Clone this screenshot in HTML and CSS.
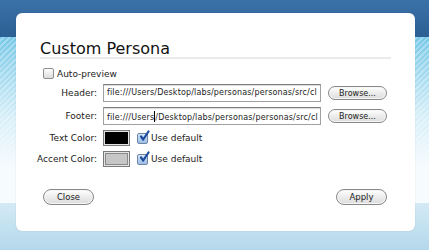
FILE: index.html
```html
<!DOCTYPE html>
<html lang="en">
<head>
    <meta charset="UTF-8">
    <title>Custom Persona</title>
    <link rel="stylesheet" href="styles.css">
</head>
<body>
    <div class="panel">
        <h1 class="title">Custom Persona</h1>
        <div class="rule"></div>

        <label class="auto-row">
            <span class="check"></span>
            <span>Auto-preview</span>
        </label>

        <div class="form">
            <span class="label">Header:</span>
            <div class="field">
                <div class="url">file:///Users/Desktop/labs/personas/personas/src/cl</div>
                <button class="btn browse">Browse...</button>
            </div>

            <span class="label">Footer:</span>
            <div class="field">
                <div class="url">file:///Users<span class="caret"></span>/Desktop/labs/personas/personas/src/cl</div>
                <button class="btn browse">Browse...</button>
            </div>

            <span class="label">Text Color:</span>
            <div class="field">
                <span class="swatch"><span class="fill dark"></span></span>
                <span class="check checked">
                    <svg width="13" height="13" viewBox="0 0 13 13"><path d="M3 6.5 L5.2 9.5 L10.5 1.5" fill="none" stroke="#1d4c9c" stroke-width="2.2" stroke-linecap="round" stroke-linejoin="round"/></svg>
                </span>
                <span class="default">Use default</span>
            </div>

            <span class="label">Accent Color:</span>
            <div class="field">
                <span class="swatch"><span class="fill light"></span></span>
                <span class="check checked">
                    <svg width="13" height="13" viewBox="0 0 13 13"><path d="M3 6.5 L5.2 9.5 L10.5 1.5" fill="none" stroke="#1d4c9c" stroke-width="2.2" stroke-linecap="round" stroke-linejoin="round"/></svg>
                </span>
                <span class="default">Use default</span>
            </div>
        </div>

        <div class="actions">
            <button class="btn wide">Close</button>
            <button class="btn wide">Apply</button>
        </div>
    </div>
</body>
</html>
```

FILE: styles.css
```css
html, body {
    margin: 0;
    width: 429px;
    height: 250px;
    overflow: hidden;
}

body {
    font-family: 'DejaVu Sans', 'Liberation Sans', sans-serif;
    color: #222;
    padding: 13px 0 0 16px;
    box-sizing: border-box;
    background:
        linear-gradient(#3a72a8, #2c5f94) 0 0 / 100% 37px no-repeat,
        linear-gradient(#d4eaf5, #b3d8eb) 0 203px / 100% 47px no-repeat,
        linear-gradient(rgba(255, 255, 255, 0), rgba(255, 255, 255, 0.7) 80px, #f6fbfd 130px) 0 37px / 100% 166px no-repeat,
        repeating-linear-gradient(135deg, #78c8e7 0 2px, #9fd9ef 2px 4px) 0 37px / 100% 166px no-repeat;
}

.panel {
    width: 399px;
    height: 218px;
    background: #fff;
    border-radius: 6px;
    box-shadow: 0 0 1px rgba(0, 0, 0, 0.25);
    padding-top: 27px;
    box-sizing: border-box;
}

.title {
    margin: 0 0 0 24px;
    font-size: 16px;
    font-weight: normal;
    line-height: 17px;
    color: #111;
}

.rule {
    margin-left: 24px;
    width: 351px;
    height: 2px;
    background: #ebebeb;
}

.auto-row {
    display: flex;
    align-items: center;
    gap: 3px;
    margin: 9px 0 0 27px;
    height: 11px;
    font-size: 9px;
}

.check {
    position: relative;
    width: 9px;
    height: 9px;
    border: 1px solid #8d8d8d;
    border-radius: 2px;
    background: linear-gradient(#fdfdfd, #dcdcdc);
    flex: none;
}

.check.checked {
    background: linear-gradient(#d7e6f7, #9cbde4);
    border-color: #6e86a8;
}

.check svg {
    position: absolute;
    left: 0;
    top: -4px;
}

.form {
    display: grid;
    grid-template-columns: 81px auto;
    grid-template-rows: 18px 18px 16px 16px;
    row-gap: 5px;
    column-gap: 6px;
    margin-top: 5px;
    font-size: 9px;
}

.form .label {
    text-align: right;
    align-self: center;
}

.field {
    display: flex;
    align-items: center;
}

.url {
    width: 218px;
    height: 18px;
    box-sizing: border-box;
    border: 1px solid #a0a0a0;
    border-top-color: #7c7c7c;
    box-shadow: inset 0 1px 1px rgba(0, 0, 0, 0.15);
    padding: 3px 0 0 3px;
    font-size: 8px;
    letter-spacing: 0.15px;
    white-space: nowrap;
    overflow: hidden;
    background: #fff;
}

.caret {
    display: inline-block;
    width: 1px;
    height: 11px;
    background: #000;
    vertical-align: -2px;
}

.btn {
    font-family: inherit;
    font-size: 8px;
    color: #222;
    border: 1px solid #888;
    border-radius: 8px;
    background: linear-gradient(#ffffff, #ececec 50%, #dcdcdc);
    box-shadow: inset 0 0 0 1px #f6f6f6;
    padding: 0;
}

.browse {
    width: 59px;
    height: 14px;
    margin-left: 7px;
}

.swatch {
    width: 27px;
    height: 16px;
    box-sizing: border-box;
    border: 1px solid #7a7a7a;
    padding: 1px;
    background: #e4e4e4;
    display: flex;
}

.fill {
    flex: 1;
}

.fill.dark {
    background: #000;
}

.fill.light {
    background: #c6c6c6;
    border: 1px solid #8a8a8a;
}

.field .check {
    margin-left: 7px;
}

.default {
    margin-left: 3px;
}

.actions {
    display: flex;
    justify-content: space-between;
    margin: 22px 28px 0 27px;
}

.wide {
    width: 51px;
    height: 16px;
    font-size: 8.5px;
}
```
